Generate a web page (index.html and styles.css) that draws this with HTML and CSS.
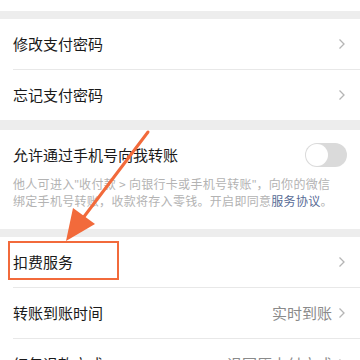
FILE: index.html
```html
<!DOCTYPE html>
<html lang="zh-CN">
<head>
  <meta charset="UTF-8">
  <title>支付管理</title>
  <link rel="stylesheet" href="styles.css">
</head>
<body>
  <div class="page">
    <div class="group top-end"></div>

    <div class="group">
      <div class="cell">
        <span class="label">修改支付密码</span>
        <span class="arrow"><svg width="8" height="12" viewBox="0 0 8 12"><polyline points="1.5,1.5 6,6 1.5,10.5" fill="none" stroke="#b5b5b5" stroke-width="1.3"/></svg></span>
      </div>
      <div class="cell">
        <span class="label">忘记支付密码</span>
        <span class="arrow"><svg width="8" height="12" viewBox="0 0 8 12"><polyline points="1.5,1.5 6,6 1.5,10.5" fill="none" stroke="#b5b5b5" stroke-width="1.3"/></svg></span>
      </div>
    </div>

    <div class="group switch-block">
      <div class="switch-row">
        <span class="label">允许通过手机号向我转账</span>
        <span class="switch"><span class="knob"></span></span>
      </div>
      <p class="desc">他人可进入<span class="q">"</span>收付款 &gt; 向银行卡或手机号转账<span class="q">"</span>，向你的微信<br>绑定手机号转账，收款将存入零钱。开启即同意<a class="link">服务协议</a>。</p>
    </div>

    <div class="group">
      <div class="cell">
        <span class="label">扣费服务</span>
        <span class="arrow"><svg width="8" height="12" viewBox="0 0 8 12"><polyline points="1.5,1.5 6,6 1.5,10.5" fill="none" stroke="#b5b5b5" stroke-width="1.3"/></svg></span>
        <span class="mark"></span>
      </div>
      <div class="cell">
        <span class="label">转账到账时间</span>
        <span class="value">实时到账</span>
        <span class="arrow"><svg width="8" height="12" viewBox="0 0 8 12"><polyline points="1.5,1.5 6,6 1.5,10.5" fill="none" stroke="#b5b5b5" stroke-width="1.3"/></svg></span>
      </div>
      <div class="cell">
        <span class="label">红包退款方式</span>
        <span class="value">退回原支付方式</span>
        <span class="arrow"><svg width="8" height="12" viewBox="0 0 8 12"><polyline points="1.5,1.5 6,6 1.5,10.5" fill="none" stroke="#b5b5b5" stroke-width="1.3"/></svg></span>
      </div>
    </div>

    <!-- 标注箭头 -->
    <svg class="pointer" width="360" height="360" viewBox="0 0 360 360">
      <line x1="148" y1="132" x2="80" y2="222" stroke="#f26a3b" stroke-width="3" stroke-linecap="round"/>
      <polygon points="66,241 73,208 95,224" fill="#f26a3b"/>
    </svg>
  </div>
</body>
</html>
```

FILE: styles.css
```css
body {
  margin: 0;
  padding: 0;
  background-color: #ededed;
  font-family: "Noto Sans CJK SC", "Noto Sans", sans-serif;
  color: #1a1a1a;
}
.page {
  position: relative;
  width: 360px;
  height: 360px;
  overflow: hidden;
  display: flex;
  flex-direction: column;
  gap: 8px;
}
.group {
  flex-shrink: 0;
  background-color: #fff;
}
.top-end {
  height: 11px;
}
.cell {
  position: relative;
  height: 50px;
  display: flex;
  align-items: center;
  padding: 0 14px 0 13px;
}
.cell + .cell {
  height: 51px;
}
.cell + .cell::before {
  content: "";
  position: absolute;
  top: 0;
  left: 13px;
  right: 0;
  height: 1px;
  background-color: #e8e8e8;
}
.label {
  flex: 1;
  font-size: 15px;
  line-height: 22px;
}
.value {
  font-size: 15px;
  color: #8a8a8a;
  margin-right: 6px;
}
.arrow {
  display: flex;
  align-items: center;
}
.switch-block {
  padding: 13px 13px 20px 13px;
  margin-top: 2px;
}
.switch-row {
  display: flex;
  align-items: center;
  height: 24px;
}
.switch {
  width: 42px;
  height: 24px;
  border-radius: 12px;
  background-color: #dadada;
  position: relative;
}
.knob {
  position: absolute;
  left: 1px;
  top: 1px;
  width: 22px;
  height: 22px;
  border-radius: 50%;
  background-color: #fff;
}
.desc {
  margin: 9px 0 0 0;
  font-size: 12px;
  line-height: 16px;
  letter-spacing: 0.3px;
  color: #b3b3b3;
  white-space: nowrap;
}
.q {
  font-family: "Liberation Sans", sans-serif;
}
.link {
  color: #576b95;
}
.mark {
  position: absolute;
  left: 8px;
  top: 4px;
  width: 111px;
  height: 39px;
  box-sizing: border-box;
  border: 2px solid #f26a3b;
}
.pointer {
  position: absolute;
  left: 0;
  top: 0;
}
```
